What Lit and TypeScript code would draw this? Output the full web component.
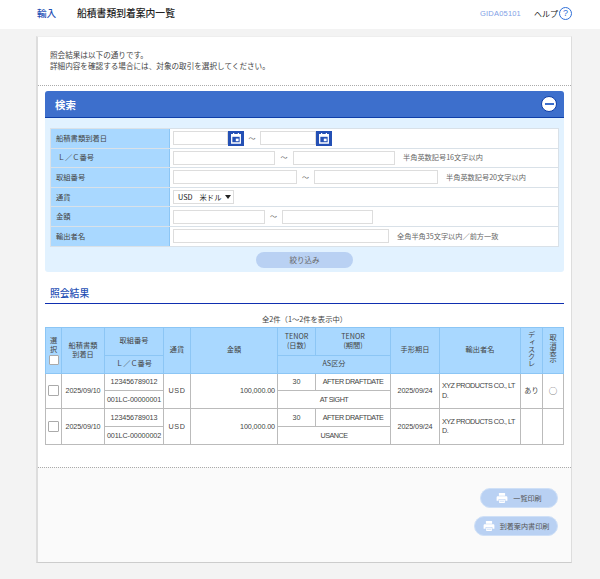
import { LitElement, html, css, svg } from "lit";
import { customElement } from "lit/decorators.js";

const printer = svg`<svg class="pr" viewBox="0 0 12 12" width="12" height="12"><path d="M3.4 1h5.2c.3 0 .5.2.5.5v2.3H2.9V1.500c0-.3.2-.5.5-.5z" fill="#fff"/><path d="M1.800 4.200h8.400c.7 0 1.200.5 1.200 1.200v3.400H9.400V7H2.600v1.800H.6V5.400c0-.7.5-1.200 1.200-1.200z" fill="#fff"/><path d="M3.200 7.600h5.600v3.400H3.200z" fill="#fff"/><path d="M4 8.800h4v.7H4z" fill="#b9d1f3"/></svg>`;
const calendar = html`<span class="cal"><svg viewBox="0 0 16 15" width="16" height="15"><path d="M3.700 3.700h8.600v8.300H3.700z" fill="none" stroke="#fff" stroke-width="1.300"/><path d="M3.500 3.300h9v2.500h-9z" fill="#fff"/><path d="M5 2h1.200v2H5zM9.800 2H11v2H9.800z" fill="#fff"/><path d="M7.800 7.600h2.800v2.600H7.800z" fill="#fff"/></svg></span>`;

@customElement("app-root")
export class AppRoot extends LitElement {
  static styles = css`
    :host { display: block; width: 600px; height: 579px; overflow: hidden; background: #f3f3f3; color: #333; font-family: "Noto Sans CJK JP", "Liberation Sans", sans-serif; font-size: 7.5px; line-height: 11px; }
    * { box-sizing: border-box; }
    .top { height: 29px; background: #fff; display: flex; align-items: center; padding: 0 28px 3px 37px; }
    .cat { color: #1f4fb5; font-size: 9.6px; font-weight: 500; width: 40px; }
    .title { color: #222; font-size: 9.8px; font-weight: 500; flex: 1; }
    .gid { color: #7f9fe6; font-size: 7.5px; font-family: "Liberation Sans", sans-serif; margin-right: 13px; letter-spacing: .2px; }
    .help { color: #222; font-size: 8px; margin-right: 1px; }
    .q { width: 13px; height: 13px; border: 1.2px solid #2f6fd8; border-radius: 50%; color: #2f6fd8; font: 9px/11px "Liberation Sans", sans-serif; text-align: center; }
    .card { margin: 7px 0 0 36px; width: 536px; height: 527px; background: #fff; border-left: 2px solid #ddd; border-bottom: 1px solid #ccc; border-right: 1px solid #ddd; border-top: 1px solid #eee; display: flex; flex-direction: column; }
    .intro { height: 49px; padding: 12px 0 0 12px; border-bottom: 1px dotted #aaa; font-size: 7.6px; color: #444; line-height: 11.2px; }
    .main { height: 381px; padding: 5px 8px 0 7px; }
    .panel { width: 519px; height: 181px; background: #e2f2ff; border-radius: 3px; }
    .phead { height: 27px; background: #3d6fcc; border-bottom: 1.5px solid #0f3fa8; border-radius: 3px 3px 0 0; display: flex; align-items: center; justify-content: space-between; padding: 0 7px 0 10px; color: #fff; font-size: 10.4px; font-weight: 700; }
    .minus { width: 16px; height: 16px; border-radius: 50%; background: #fff; border: 1px solid #0f3fa8; display: flex; align-items: center; justify-content: center; }
    .minus i { display: block; width: 9px; height: 2px; background: #3d6fcc; }
    .form { margin: 10px 0 0 5px; width: 509px; border: 1px solid #d9e1e8; border-top: 0; background: #fff; }
    .row { display: flex; height: 19.6px; border-top: 1px solid #d9e1e8; }
    .lab { width: 119px; background: #a9d8ff; border-right: 1px solid #8cc6f5; padding-left: 5px; display: flex; align-items: center; color: #444; font-size: 7.3px; }
    .vals { flex: 1; display: flex; align-items: center; padding-left: 3px; color: #555; }
    .in { display: block; height: 14px; background: #fff; border: 1px solid #ddd; border-bottom-width: 1.2px; }
    .w55 { width: 55px; } .w56 { width: 56px; } .w91 { width: 91px; } .w92 { width: 92px; }
    .w102 { width: 102px; } .w124 { width: 124px; } .w216 { width: 216px; }
    .cal { display: flex; width: 16px; height: 15px; background: #2450b5; align-items: center; justify-content: center; overflow: hidden; }
    .tl { width: 17px; text-align: center; color: #666; font-size: 7px; }
    .tl.n { width: 16px; } .tl.w { width: 18px; }
    .note { font-size: 7.2px; color: #666; margin-left: 8px; }
    .sel { width: 61px; height: 14px; border: 1px solid #ddd; display: flex; align-items: center; padding-left: 4px; color: #222; font-size: 7.3px; }
    .sel em { font-style: normal; margin-left: 7px; }
    .sel b { width: 0; height: 0; border: 3px solid transparent; border-top: 4px solid #222; border-bottom: 0; margin-left: 4px; }
    .go { display: block; margin: 5px auto 0; width: 97px; height: 16px; border-radius: 8px; background: #b9d1f3; color: #666; font-size: 7.5px; line-height: 16px; text-align: center; }
    .h2 { color: #1f4fb5; font-size: 9.8px; font-weight: 500; height: 31.500px; padding: 14px 0 0 5px; line-height: 14px; border-bottom: 1.5px solid #0f2fb0; width: 519px; }
    .count { width: 519px; text-align: center; margin-top: 10px; height: 13px; font-size: 7.3px; color: #444; }
    table { border-collapse: collapse; table-layout: fixed; width: 519px; font-size: 7.2px; line-height: 9.5px; color: #444; }
    th, td { border: 1px solid #bbb; padding: 0; text-align: center; vertical-align: middle; overflow: hidden; }
    th { background: #a9d8ff; font-weight: 400; border-color: #8cc6f5; color: #444; }
    tr.h1 { height: 28px; } tr.h2r { height: 18px; } tr.s { height: 17.800px; }
    .c1 { width: 16px; } .c2 { width: 43px; } .c3 { width: 59px; } .c4 { width: 27px; } .c5 { width: 87px; } .c6 { width: 38px; }
    .c7 { width: 75px; } .c8 { width: 49px; } .c9 { width: 81px; } .c10 { width: 22px; } .c11 { width: 21px; }
    .r { text-align: right; padding-right: 2px; } .l { text-align: left; padding-left: 2px; }
    .mono { font-family: "Liberation Sans", "Noto Sans CJK JP", sans-serif; font-size: 7.2px; letter-spacing: -.1px; }
    .tight { letter-spacing: -.5px; white-space: nowrap; }
    .wide { letter-spacing: .6px; }
    .circle { font-size: 8.5px; color: #555; }
    .vert { writing-mode: vertical-rl; display: inline-block; line-height: 10px; }
    .cb { display: block; width: 11px; height: 11px; border: 1px solid #aaa; border-radius: 1px; background: #fff; margin: 0 auto; }
    .cbh { width: 10px; height: 10px; }
    .sel0 { display: block; width: 8px; margin: 0 auto; line-height: 9.5px; }
    .foot { flex: 1; background: #fafafa; border-top: 1px dotted #aaa; display: flex; flex-direction: column; align-items: flex-end; gap: 8px; padding: 20px 13px 0 0; }
    .pbtn { height: 20px; border-radius: 10px; background: #b9d1f3; border: 1px solid #cfe0f7; display: flex; align-items: center; justify-content: center; gap: 5px; color: #555; font-size: 7.100px; }
    .pbtn.a { width: 78px; } .pbtn.b { width: 84px; }
  `;

  private bodyRow(no: string, lc: string, as: string, disc: string, cancel: string) {
    return html`
      <tr class="s">
        <td rowspan="2"><span class="cb"></span></td>
        <td rowspan="2" class="mono">2025/09/10</td>
        <td class="mono">${no}</td>
        <td rowspan="2" class="mono wide">USD</td>
        <td rowspan="2" class="r mono">100,000.00</td>
        <td class="mono">30</td>
        <td class="mono tight">AFTER DRAFTDATE</td>
        <td rowspan="2" class="mono">2025/09/24</td>
        <td rowspan="2" class="l mono tight">XYZ PRODUCTS CO., LT<br />D.</td>
        <td rowspan="2">${disc}</td>
        <td rowspan="2" class="circle">${cancel}</td>
      </tr>
      <tr class="s">
        <td class="mono">${lc}</td>
        <td colspan="2" class="mono tight">${as}</td>
      </tr>`;
  }

  render() {
    return html`
      <div class="top">
        <span class="cat">輸入</span><span class="title">船積書類到着案内一覧</span>
        <span class="gid">GIDA05101</span><span class="help">ヘルプ</span><span class="q">?</span>
      </div>
      <div class="card">
        <div class="intro">照会結果は以下の通りです。<br />詳細内容を確認する場合には、対象の取引を選択してください。</div>
        <div class="main">
          <div class="panel">
            <div class="phead"><span>検索</span><span class="minus"><i></i></span></div>
            <div class="form">
              <div class="row"><div class="lab">船積書類到着日</div><div class="vals"><span class="in w55"></span>${calendar}<span class="tl n">～</span><span class="in w56"></span>${calendar}</div></div>
              <div class="row"><div class="lab">&nbsp;Ｌ／Ｃ番号</div><div class="vals"><span class="in w102"></span><span class="tl w">～</span><span class="in w102"></span><span class="note">半角英数記号16文字以内</span></div></div>
              <div class="row"><div class="lab">取組番号</div><div class="vals"><span class="in w124"></span><span class="tl">～</span><span class="in w124"></span><span class="note">半角英数記号20文字以内</span></div></div>
              <div class="row"><div class="lab">通貨</div><div class="vals"><span class="sel">USD<em>米ドル</em><b></b></span></div></div>
              <div class="row"><div class="lab">金額</div><div class="vals"><span class="in w92"></span><span class="tl">～</span><span class="in w91"></span></div></div>
              <div class="row"><div class="lab">輸出者名</div><div class="vals"><span class="in w216"></span><span class="note">全角半角35文字以内／前方一致</span></div></div>
            </div>
            <span class="go">絞り込み</span>
          </div>
          <div class="h2">照会結果</div>
          <div class="count">全2件（1～2件を表示中）</div>
          <table>
            <colgroup><col class="c1" /><col class="c2" /><col class="c3" /><col class="c4" /><col class="c5" /><col class="c6" /><col class="c7" /><col class="c8" /><col class="c9" /><col class="c10" /><col class="c11" /></colgroup>
            <thead>
              <tr class="h1">
                <th rowspan="2"><span class="sel0">選択</span><span class="cb cbh"></span></th>
                <th rowspan="2">船積書類<br />到着日</th>
                <th>取組番号</th>
                <th rowspan="2">通貨</th>
                <th rowspan="2">金額</th>
                <th>TENOR<br />(日数)</th>
                <th>TENOR<br />(期間)</th>
                <th rowspan="2">手形期日</th>
                <th rowspan="2">輸出者名</th>
                <th rowspan="2"><span class="vert">ディスクレ</span></th>
                <th rowspan="2"><span class="vert">取消表示</span></th>
              </tr>
              <tr class="h2r"><th>Ｌ／Ｃ番号</th><th colspan="2">AS区分</th></tr>
            </thead>
            <tbody>
              ${this.bodyRow("123456789012", "001LC-00000001", "AT SIGHT", "あり", "○")}
              ${this.bodyRow("123456789013", "001LC-00000002", "USANCE", "", "")}
            </tbody>
          </table>
        </div>
        <div class="foot">
          <div class="pbtn a">${printer}<span>一覧印刷</span></div>
          <div class="pbtn b">${printer}<span>到着案内書印刷</span></div>
        </div>
      </div>`;
  }
}
